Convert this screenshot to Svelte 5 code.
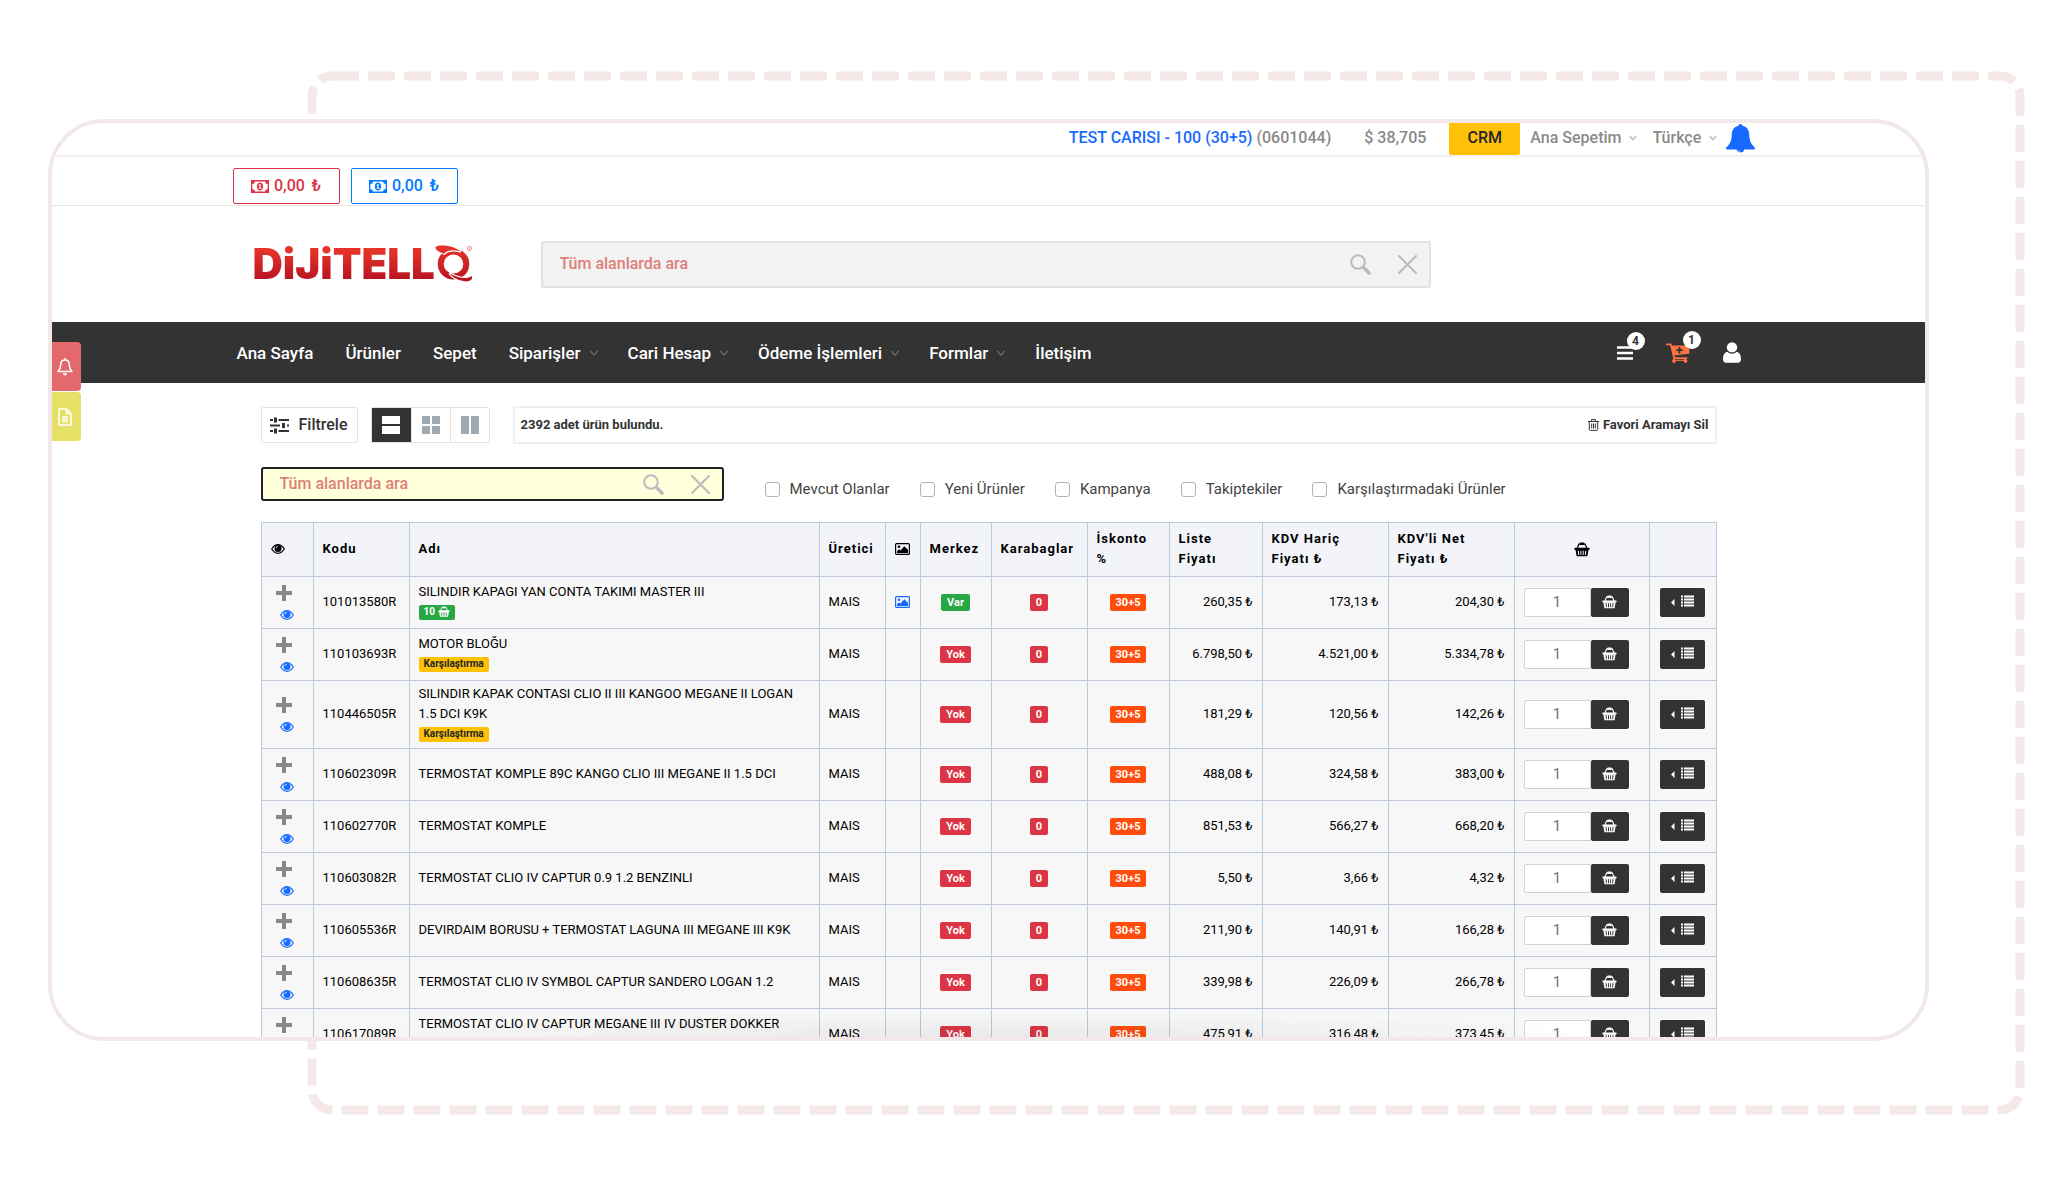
<script lang="ts">
  type Product = {
    code: string;
    name: string;
    inStock?: boolean;
    inCart?: number;
    compared?: boolean;
    list: string;
    net: string;
    gross: string;
  };

  const menu = [
    { label: "Ana Sayfa" },
    { label: "Ürünler" },
    { label: "Sepet" },
    { label: "Siparişler", sub: true },
    { label: "Cari Hesap", sub: true },
    { label: "Ödeme İşlemleri", sub: true },
    { label: "Formlar", sub: true },
    { label: "İletişim" },
  ];

  const filters = [
    "Mevcut Olanlar",
    "Yeni Ürünler",
    "Kampanya",
    "Takiptekiler",
    "Karşılaştırmadaki Ürünler",
  ];

  const products: Product[] = [
    { code: "101013580R", name: "SILINDIR KAPAGI YAN CONTA TAKIMI MASTER III", inStock: true, inCart: 10, list: "260,35", net: "173,13", gross: "204,30" },
    { code: "110103693R", name: "MOTOR BLOĞU", compared: true, list: "6.798,50", net: "4.521,00", gross: "5.334,78" },
    { code: "110446505R", name: "SILINDIR KAPAK CONTASI CLIO II III KANGOO MEGANE II LOGAN 1.5 DCI K9K", compared: true, list: "181,29", net: "120,56", gross: "142,26" },
    { code: "110602309R", name: "TERMOSTAT KOMPLE 89C KANGO CLIO III MEGANE II 1.5 DCI", list: "488,08", net: "324,58", gross: "383,00" },
    { code: "110602770R", name: "TERMOSTAT KOMPLE", list: "851,53", net: "566,27", gross: "668,20" },
    { code: "110603082R", name: "TERMOSTAT CLIO IV CAPTUR 0.9 1.2 BENZINLI", list: "5,50", net: "3,66", gross: "4,32" },
    { code: "110605536R", name: "DEVIRDAIM BORUSU + TERMOSTAT LAGUNA III MEGANE III K9K", list: "211,90", net: "140,91", gross: "166,28" },
    { code: "110608635R", name: "TERMOSTAT CLIO IV SYMBOL CAPTUR SANDERO LOGAN 1.2", list: "339,98", net: "226,09", gross: "266,78" },
    { code: "110617089R", name: "TERMOSTAT CLIO IV CAPTUR MEGANE III IV DUSTER DOKKER LODGY 1.5 DCI", list: "475,91", net: "316,48", gross: "373,45" },
  ];

  let view = $state("list");
</script>

{#snippet chevron()}
  <svg class="chevron" width="10" height="6" viewBox="0 0 10 6" aria-hidden="true">
    <path d="M1 .8 5 5 9 .8" fill="none" stroke="currentColor" stroke-width="1.5" />
  </svg>
{/snippet}

{#snippet money()}
  <svg width="18" height="13" viewBox="0 0 18 13" aria-hidden="true">
    <path fill="currentColor" fill-rule="evenodd" d="M0 0h18v13H0zM4 1.4A2.8 2.8 0 0 1 1.3 4v5A2.8 2.8 0 0 1 4 11.6h10A2.8 2.8 0 0 1 16.7 9V4A2.8 2.8 0 0 1 14 1.4z" />
    <path fill="currentColor" fill-rule="evenodd" d="M9 2.5c2 0 3.2 1.8 3.2 4s-1.2 4-3.2 4-3.2-1.8-3.2-4 1.2-4 3.2-4zM8.700 4 7.400 5.200l.6.6.5-.4v2.400h-.9v.9h2.900v-.9h-.9V4z" />
  </svg>
{/snippet}

{#snippet magnifier()}
  <svg width="21" height="21" viewBox="0 0 21 21" aria-hidden="true">
    <circle cx="8" cy="8" r="6.8" fill="none" stroke="currentColor" stroke-width="2" />
    <path d="m14.5 14.5 4.5 4.5" stroke="currentColor" stroke-width="3.6" stroke-linecap="round" />
    <path d="m12.5 12.5 2 2" stroke="currentColor" stroke-width="2" />
  </svg>
{/snippet}

{#snippet cross()}
  <svg width="19" height="19" viewBox="0 0 19 19" aria-hidden="true">
    <path d="m1 1 17 17M18 1 1 18" stroke="currentColor" stroke-width="2" stroke-linecap="round" />
  </svg>
{/snippet}

{#snippet eye()}
  <svg width="14" height="10" viewBox="0 0 14 10" aria-hidden="true">
    <path d="M.7 5C2.6 2 4.7.7 7 .7S11.4 2 13.3 5C11.4 8 9.3 9.3 7 9.3S2.6 8 .7 5Z" fill="none" stroke="currentColor" stroke-width="1.2" />
    <path fill="currentColor" fill-rule="evenodd" d="M7 1a3.5 3.5 0 1 1 0 7 3.5 3.5 0 0 1 0-7zm-.2 1.1C5.6 2.2 4.8 3 4.7 4.300h.7c.1-.9.6-1.4 1.4-1.5z" />
  </svg>
{/snippet}

{#snippet basket(size: number)}
  <svg width={size} height={size} viewBox="0 0 16 16" aria-hidden="true">
    <path d="M3.2 6.5 4.8 2.2h6.400L12.800 6.500" fill="none" stroke="currentColor" stroke-width="1.2" />
    <rect x="5.5" y=".6" width="5" height="2.4" rx="1" fill="currentColor" />
    <rect x=".3" y="5.8" width="15.4" height="2.2" rx="1.1" fill="currentColor" />
    <path fill="currentColor" fill-rule="evenodd" d="M1.500 7.800h13l-1 5.700q-.1.700-.8.700H3.300q-.7 0-.8-.7zM3.800 8.800l.4 4.200h1L4.900 8.800zm2.600 0v4.200h1V8.800zm2.300 0v4.200h1V8.800zm2.500 0-.3 4.200h1l.4-4.200z" />
  </svg>
{/snippet}

{#snippet picture()}
  <svg width="15" height="12" viewBox="0 0 15 12" aria-hidden="true">
    <rect x=".6" y=".6" width="13.8" height="10.8" rx="1" fill="none" stroke="currentColor" stroke-width="1.2" />
    <circle cx="4" cy="3.8" r="1.3" fill="currentColor" />
    <path d="M2 10V8.200l2-2 1.400 1.300L9.300 3.200 13 6.800V10z" fill="currentColor" />
  </svg>
{/snippet}

<div class="page">
  <svg class="dashes" aria-hidden="true"><rect rx="20" /></svg>

  <div class="frame">
    <div class="topbar">
      <div class="topbar-inner">
        <span class="account"><a href="#cari">TEST CARISI - 100 (30+5)</a> (0601044)</span>
        <span class="rate">$ 38,705</span>
        <button class="crm">CRM</button>
        <button class="drop">Ana Sepetim {@render chevron()}</button>
        <label class="drop lang">
          <select aria-label="Dil"><option>Türkçe</option></select>
          {@render chevron()}
        </label>
        <button class="bell" aria-label="Bildirimler">
          <svg width="29" height="30" viewBox="0 0 29 30" aria-hidden="true">
            <path fill="currentColor" d="M14.500 0c1.200 0 1.900.8 2 1.700 4 .8 6.500 3.900 6.700 8.300.3 6.400 1.200 9.300 5.300 13.200.9.900.4 2.300-.9 2.300H18.300a3.900 3.900 0 0 1-7.600 0H1.400c-1.300 0-1.800-1.400-.9-2.300 4.100-3.900 5-6.800 5.300-13.200.2-4.400 2.700-7.500 6.700-8.300.1-.9.800-1.700 2-1.700z" />
            <path d="M12.500 26.500q.3 1.600 1.800 1.800" stroke="#fff" stroke-width=".8" fill="none" />
          </svg>
        </button>
      </div>
    </div>

    <div class="balances">
      <div class="wide">
        <button class="balance red">{@render money()} 0,00 <span>₺</span></button>
        <button class="balance blue">{@render money()} 0,00 <span>₺</span></button>
      </div>
    </div>

    <header class="wide header">
      <a class="logo" href="#anasayfa" aria-label="Dijitello">
        <span>DiJiTELL</span>
        <svg width="38" height="38" viewBox="0 0 38 38" aria-hidden="true">
          <defs>
            <linearGradient id="ring" gradientUnits="userSpaceOnUse" x1="0" y1="2" x2="0" y2="36">
              <stop offset="0" stop-color="#e63329" />
              <stop offset="1" stop-color="#b91422" />
            </linearGradient>
          </defs>
          <ellipse cx="18.5" cy="19" rx="12.8" ry="12.6" fill="none" stroke="url(#ring)" stroke-width="6" />
          <g fill="url(#ring)" stroke="#fff" stroke-width="2.4" paint-order="stroke">
            <path d="M.5 2C5-.5 17 0 26 6.500 19 4.500 12 5 9.500 8.500 4 7.500 0 4.500.5 2z" />
            <path d="M36.500 31c2 3-1.500 6-7 5.300-6-.8-12-3.800-15-8 6 3.800 14 5.500 18 4.500 2-.4 3-1 4-1.800z" />
          </g>
          <circle cx="34.5" cy="3.500" r="2.200" fill="none" stroke="#ee8e88" />
          <path d="M34.500 2.500v2" stroke="#ee8e88" />
        </svg>
      </a>
      <div class="search">
        <input type="text" placeholder="Tüm alanlarda ara" aria-label="Sitede ara" />
        <button aria-label="Ara">{@render magnifier()}</button>
        <button aria-label="Temizle">{@render cross()}</button>
      </div>
    </header>

    <nav>
      <div class="wide nav-inner">
        {#each menu as item}
          <a href="#menu" class:sub={item.sub}>{item.label}{#if item.sub}{@render chevron()}{/if}</a>
        {/each}
        <div class="tools">
          <button class="tool" aria-label="Listeler">
            <svg width="16" height="14" viewBox="0 0 16 14" aria-hidden="true">
              <path d="M0 1.500h16M0 7h16M0 12.500h16" stroke="currentColor" stroke-width="2.4" />
            </svg>
            <span class="count">4</span>
          </button>
          <button class="tool cart" aria-label="Sepet">
            <svg width="24" height="20" viewBox="0 0 24 20" aria-hidden="true">
              <path d="M.8 1.400h4l3.400 13.800h12.300" fill="none" stroke="currentColor" stroke-width="1.8" stroke-linecap="round" stroke-linejoin="round" />
              <path d="M5.500 2.500h17.800v8.300L7.600 12.600z" fill="currentColor" />
              <circle cx="8" cy="18" r="1.9" fill="currentColor" />
              <circle cx="19.500" cy="18" r="1.9" fill="currentColor" />
              <path d="M8 17.300h12" stroke="currentColor" stroke-width="1.2" />
              <path d="M13.500 4v6.400M10.300 7.200h6.400" stroke="#333" stroke-width="1.8" />
            </svg>
            <span class="count">1</span>
          </button>
          <button class="tool" aria-label="Hesabım">
            <svg width="18" height="21" viewBox="0 0 18 21" aria-hidden="true">
              <circle cx="9" cy="5.400" r="5.200" fill="currentColor" />
              <path d="M4.300 9.800Q9 13 13.700 9.800C17 10.500 18 14 18 17.300c0 2.200-1.200 3.500-3 3.500H3c-1.800 0-3-1.300-3-3.500C0 14 1 10.500 4.300 9.800z" fill="currentColor" />
              <path d="M4.300 9.400Q9 13 13.700 9.400" fill="none" stroke="#333" stroke-width=".8" />
            </svg>
          </button>
        </div>
      </div>
    </nav>

    <main>
      <div class="toolbar">
        <button class="filter">
          <svg width="19" height="17" viewBox="0 0 19 17" aria-hidden="true">
            <path d="M0 3h3M8.500 3H19M0 8.500h10M17 8.500h2M0 14h3M8.500 14H19" stroke="currentColor" stroke-width="2" />
            <path d="M5.500.5v5M13.500 6v5M5.500 11.500v5" stroke="currentColor" stroke-width="3" />
          </svg>
          Filtrele
        </button>
        <div class="views">
          <button class:active={view === "list"} onclick={() => (view = "list")} aria-label="Liste">
            <svg width="18" height="18" viewBox="0 0 18 18"><path fill="currentColor" d="M0 0h18v8H0zM0 10h18v8H0z" /></svg>
          </button>
          <button class:active={view === "grid"} onclick={() => (view = "grid")} aria-label="Izgara">
            <svg width="18" height="18" viewBox="0 0 18 18"><path fill="currentColor" d="M0 0h8v8H0zM10 0h8v8h-8zM0 10h8v8H0zM10 10h8v8h-8z" /></svg>
          </button>
          <button class:active={view === "columns"} onclick={() => (view = "columns")} aria-label="Sütun">
            <svg width="18" height="18" viewBox="0 0 18 18"><path fill="currentColor" d="M0 0h8v18H0zM10 0h8v18h-8z" /></svg>
          </button>
        </div>
        <div class="results">
          <span>2392 adet ürün bulundu.</span>
          <button>
            <svg width="11" height="12" viewBox="0 0 11 12" aria-hidden="true">
              <path d="M0 2.500h11M3.500 2.300V.6h4v1.700M1.300 2.500v7.900q0 1 1 1h6.400q1 0 1-1V2.500M3.700 4.500v5M5.500 4.500v5M7.300 4.500v5" fill="none" stroke="currentColor" />
            </svg>
            Favori Aramayı Sil
          </button>
        </div>
      </div>

      <div class="filters">
        <div class="search small">
          <input type="text" placeholder="Tüm alanlarda ara" aria-label="Ürünlerde ara" />
          <button aria-label="Ara">{@render magnifier()}</button>
          <button aria-label="Temizle">{@render cross()}</button>
        </div>
        <div class="checks">
          {#each filters as label}
            <label><input type="checkbox" />{label}</label>
          {/each}
        </div>
      </div>

      <table>
        <colgroup>
          <col class="w-eye" /><col class="w-code" /><col /><col class="w-maker" />
          <col class="w-pic" /><col class="w-stock" /><col class="w-code" /><col class="w-rate" />
          <col class="w-list" /><col class="w-price" /><col class="w-price" />
          <col class="w-qty" /><col class="w-more" />
        </colgroup>
        <thead>
          <tr>
            <th>{@render eye()}</th>
            <th>Kodu</th>
            <th>Adı</th>
            <th>Üretici</th>
            <th>{@render picture()}</th>
            <th>Merkez</th>
            <th>Karabaglar</th>
            <th>İskonto %</th>
            <th>Liste Fiyatı</th>
            <th>KDV Hariç Fiyatı ₺</th>
            <th>KDV'li Net Fiyatı ₺</th>
            <th class="center">{@render basket(16)}</th>
            <th></th>
          </tr>
        </thead>
        <tbody>
          {#each products as p (p.code)}
            <tr>
              <td>
                <div class="row-icons">
                  <button class="plus" aria-label="Takibe ekle">
                    <svg width="16" height="16" viewBox="0 0 16 16"><path d="M8 0v16M0 8h16" stroke="currentColor" stroke-width="4" /></svg>
                  </button>
                  <a href="#urun" aria-label="İncele">{@render eye()}</a>
                </div>
              </td>
              <td>{p.code}</td>
              <td>
                {p.name}
                {#if p.inCart}
                  <div class="tagline"><span class="tag green">{p.inCart} {@render basket(12)}</span></div>
                {/if}
                {#if p.compared}
                  <div class="tagline"><span class="tag yellow">Karşılaştırma</span></div>
                {/if}
              </td>
              <td>MAIS</td>
              <td>{#if p.inStock}<a class="pic" href="#resim" aria-label="Resim">{@render picture()}</a>{/if}</td>
              <td class="center">
                <span class="badge" class:green={p.inStock}>{p.inStock ? "Var" : "Yok"}</span>
              </td>
              <td class="center"><span class="badge">0</span></td>
              <td class="center"><span class="badge orange">30+5</span></td>
              <td class="num">{p.list} ₺</td>
              <td class="num">{p.net} ₺</td>
              <td class="num">{p.gross} ₺</td>
              <td>
                <div class="qty">
                  <input type="text" value="1" aria-label="Adet" />
                  <button class="dark" aria-label="Sepete ekle">{@render basket(15)}</button>
                </div>
              </td>
              <td class="center">
                <button class="dark more" aria-label="Detay">
                  <svg width="23" height="14" viewBox="0 0 23 14" aria-hidden="true">
                    <path d="M3.500 4v7L0 7.500z" fill="currentColor" />
                    <path d="M10 1.500h2M13 1.500h10M10 4.500h2M13 4.500h10M10 7.500h2M13 7.500h10M10 10.500h2M13 10.500h10" stroke="currentColor" stroke-width="1.8" />
                  </svg>
                </button>
              </td>
            </tr>
          {/each}
        </tbody>
      </table>
    </main>

    <div class="side-tabs">
      <button class="alerts" aria-label="Uyarılar">
        <svg width="16" height="18" viewBox="0 0 16 18" aria-hidden="true">
          <path d="M8 2C4.800 2 3.600 4.500 3.600 7.200 3.600 10.500 2.600 12 1 13.500h14c-1.600-1.500-2.600-3-2.600-6.300C12.400 4.500 11.200 2 8 2zM8 0v2" fill="none" stroke="currentColor" stroke-width="1.5" stroke-linejoin="round" />
          <path d="M5.800 15.300h4.400Q9.700 17.500 8 17.500t-2.200-2.200z" fill="currentColor" />
        </svg>
      </button>
      <button class="notes" aria-label="Notlar">
        <svg width="14" height="18" viewBox="0 0 14 18" aria-hidden="true">
          <path d="M1.500 1h7L13 5.500v11q0 .5-.5.500h-11q-.5 0-.5-.5v-15q0-.5.5-.5zM8.500 1v4.500H13M4 9h6M4 11.300h6M4 13.600h6" fill="none" stroke="currentColor" stroke-width="1.5" />
        </svg>
      </button>
    </div>
  </div>
</div>

<style>
  :global(body) {
    margin: 0;
    background: #fff;
  }
  .page,
  .page :global(*) {
    box-sizing: border-box;
  }
  .page {
    position: relative;
    height: 100vh;
    padding: 119px 119px 145px 48px;
    font-family: Roboto, sans-serif;
    font-size: 13px;
    line-height: 20px;
    color: #000;
  }
  button,
  input,
  select {
    font: inherit;
    color: inherit;
    margin: 0;
    padding: 0;
    border: 0;
    background: none;
  }
  button {
    cursor: pointer;
  }
  a {
    color: inherit;
    text-decoration: none;
  }
  svg {
    display: block;
    flex: none;
  }
  .dashes {
    position: absolute;
    inset: 0;
    width: 100%;
    height: 100%;
  }
  .dashes rect {
    x: 312px;
    y: 76px;
    width: calc(100% - 340px);
    height: calc(100% - 152px);
    fill: none;
    stroke: #f5e8e8;
    stroke-width: 9px;
    stroke-dasharray: 27px 9px;
  }
  .frame {
    position: relative;
    height: 100%;
    overflow: hidden;
    background: #fff;
    border: 4px solid #f3e8e8;
    border-radius: 56px;
  }
  .frame::after {
    content: "";
    position: absolute;
    inset: auto 15% 0;
    height: 26px;
    background: radial-gradient(ellipse at bottom, rgba(0, 0, 0, 0.06), transparent 70%);
    pointer-events: none;
  }
  .wide {
    display: flex;
    width: 100%;
    max-width: 1512px;
    margin: 0 auto;
  }

  .topbar {
    height: 34px;
    border-bottom: 2px solid #f0f0f0;
    font-size: 16px;
    font-weight: 500;
    color: #8a8a8a;
  }
  .topbar-inner {
    display: flex;
    align-items: center;
    justify-content: flex-end;
    height: 100%;
    max-width: 1532px;
    margin: 0 auto;
  }
  .account,
  .rate,
  .drop {
    padding-bottom: 2px;
  }
  .account a {
    color: #1769ff;
  }
  .rate {
    margin: 0 23px 0 33px;
  }
  .crm {
    height: 32px;
    width: 71px;
    margin-right: 10px;
    padding-bottom: 2px;
    background: #ffc107;
    border-radius: 0 0 2px 2px;
    color: #212529;
  }
  .drop {
    display: flex;
    align-items: center;
    gap: 7px;
    margin-right: 16px;
  }
  .drop .chevron {
    width: 8px;
    color: #b0b0b0;
  }
  .lang {
    margin-right: 9px;
  }
  select {
    appearance: none;
  }
  .bell {
    color: #1769ff;
  }

  .balances {
    height: 49px;
    padding-top: 11px;
    border-bottom: 1px solid #e6e6e6;
  }
  .balances .wide {
    gap: 11px;
  }
  .balance {
    display: flex;
    align-items: center;
    justify-content: center;
    gap: 5px;
    width: 107px;
    height: 36px;
    border: 1px solid currentColor;
    border-radius: 2px;
    font-size: 16px;
    font-weight: 500;
  }
  .balance span {
    margin-left: 2px;
  }
  .red {
    color: #dc3545;
  }
  .blue {
    color: #007bff;
  }

  .header {
    align-items: center;
    height: 116px;
    padding-left: 20px;
  }
  .logo {
    display: flex;
    align-items: center;
    width: 288px;
    font: 900 42px/38px Inter, sans-serif;
  }
  .logo span {
    background: linear-gradient(#e63329 15%, #b91422 90%);
    background-clip: text;
    color: transparent;
  }
  .search {
    display: flex;
    align-items: center;
    width: 890px;
    height: 47px;
    padding: 0 12px 0 17px;
    gap: 27px;
    background: #f2f2f2;
    border: 2px solid #e2e2e2;
    border-radius: 2px;
    color: #bbb;
  }
  .search input {
    flex: 1;
    min-width: 0;
    font-size: 16px;
    font-weight: 500;
    outline: none;
  }
  .search input::placeholder {
    color: #dd7f79;
    opacity: 1;
  }
  .search.small {
    width: 463px;
    height: 34px;
    background: #ffffdc;
    border-color: #222;
    border-radius: 3px;
  }

  nav {
    background: #333;
    color: #fff;
    font-size: 17px;
    font-weight: 500;
  }
  .nav-inner {
    align-items: center;
    height: 61px;
    padding: 0 4px;
    gap: 32px;
  }
  .nav-inner a {
    display: flex;
    align-items: center;
    gap: 8px;
    white-space: nowrap;
  }
  .nav-inner .sub {
    margin-right: -3px;
  }
  .nav-inner .chevron {
    color: #666;
  }
  .tools {
    display: flex;
    align-items: center;
    gap: 33px;
    margin-left: auto;
  }
  .tool {
    position: relative;
  }
  .cart {
    color: #ff7043;
  }
  .count {
    position: absolute;
    top: -14px;
    left: 10px;
    width: 18px;
    height: 18px;
    border-radius: 50%;
    background: #fff;
    color: #333;
    font-size: 12px;
    font-weight: 700;
    line-height: 18px;
  }
  .cart .count {
    top: -12px;
    left: 17px;
  }

  main {
    max-width: 1456px;
    margin: 0 auto;
    padding-top: 23px;
  }
  .toolbar {
    display: flex;
    align-items: center;
    color: #333;
  }
  .filter {
    display: flex;
    align-items: center;
    justify-content: center;
    gap: 9px;
    width: 97px;
    height: 36px;
    border: 1px solid #e3e3e3;
    border-radius: 2px;
    font-size: 16px;
    font-weight: 500;
  }
  .views {
    display: flex;
    margin: 0 23px 0 13px;
    border: 1px solid #e3e3e3;
    border-radius: 2px;
    color: #9fa9b1;
  }
  .views button {
    display: grid;
    place-items: center;
    width: 39px;
    height: 34px;
  }
  .views button + button {
    border-left: 1px solid #e3e3e3;
  }
  .views .active {
    background: #333;
    color: #fff;
  }
  .results {
    display: flex;
    flex: 1;
    align-items: center;
    justify-content: space-between;
    height: 38px;
    padding: 0 6px;
    border: 2px solid #f0f0f0;
    font-size: 13px;
    font-weight: 700;
  }
  .results button {
    display: flex;
    align-items: center;
    gap: 4px;
  }
  .filters {
    display: flex;
    align-items: center;
    gap: 41px;
    margin: 23px 0 21px;
  }
  .checks {
    display: flex;
    gap: 30px;
    padding-top: 10px;
    font-size: 15px;
    color: #444;
  }
  .checks label {
    display: flex;
    align-items: center;
    gap: 10px;
  }
  .checks input {
    appearance: none;
    width: 15px;
    height: 15px;
    border: 1px solid #adb5bd;
    border-radius: 3px;
    background: #fff;
  }

  table {
    width: 100%;
    table-layout: fixed;
    border-collapse: collapse;
    background: #f7f7f7;
  }
  .w-eye {
    width: 52px;
  }
  .w-code {
    width: 96px;
  }
  .w-maker {
    width: 66px;
  }
  .w-pic {
    width: 35px;
  }
  .w-stock {
    width: 71px;
  }
  .w-rate {
    width: 82px;
  }
  .w-list {
    width: 93px;
  }
  .w-price {
    width: 126px;
  }
  .w-qty {
    width: 135px;
  }
  .w-more {
    width: 67px;
  }
  th,
  td {
    height: 52px;
    padding: 3px 9px 4px;
    border: 1px solid #bccadb;
    text-align: left;
    vertical-align: middle;
  }
  th {
    height: 54px;
    padding-right: 0;
    background: #f3f4f9;
    font-weight: 700;
    letter-spacing: 1px;
  }
  th:nth-child(n + 8) {
    padding-right: 30px;
  }
  .center {
    text-align: center;
  }
  th.center {
    padding: 0;
  }
  th.center :global(svg) {
    margin: 0 auto;
  }
  .num {
    text-align: right;
  }
  .row-icons {
    display: flex;
    flex-direction: column;
    align-items: center;
    gap: 9px;
    color: #1769ff;
  }
  .plus {
    margin-right: 6px;
    color: #888;
  }
  .tagline {
    display: flex;
    align-items: center;
    height: 20px;
  }
  .tag {
    display: flex;
    align-items: center;
    gap: 3px;
    height: 15px;
    padding: 0 5px;
    border-radius: 2px;
    font-size: 10px;
    font-weight: 700;
  }
  .badge {
    display: inline-block;
    padding: 0 6px;
    border-radius: 2px;
    background: #dc3545;
    color: #fff;
    font-size: 11px;
    font-weight: 700;
    line-height: 17px;
  }
  .green {
    background: #28a745;
    color: #fff;
  }
  .yellow {
    background: #ffc107;
    color: #212529;
  }
  .orange {
    background: #ff4d0d;
  }
  .pic {
    color: #1769ff;
  }
  .qty {
    display: flex;
  }
  .qty input {
    width: 67px;
    height: 29px;
    border: 1px solid #ced4da;
    border-radius: 2px 0 0 2px;
    background: #fff;
    color: #6c757d;
    font-size: 15px;
    text-align: center;
  }
  .dark {
    display: grid;
    place-items: center;
    width: 38px;
    height: 29px;
    border-radius: 2px;
    background: #333;
    color: #fff;
  }
  .more {
    width: 45px;
    margin: 0 auto;
  }

  .side-tabs {
    position: absolute;
    top: 219px;
    left: 0;
    display: flex;
    flex-direction: column;
    gap: 1px;
  }
  .side-tabs button {
    display: grid;
    place-items: center;
    width: 29px;
    height: 49px;
    padding-right: 3px;
    border-radius: 0 4px 4px 0;
    color: #fff;
  }
  .side-tabs .alerts {
    background: #e3696c;
  }
  .side-tabs .notes {
    background: #e5e166;
  }
</style>
